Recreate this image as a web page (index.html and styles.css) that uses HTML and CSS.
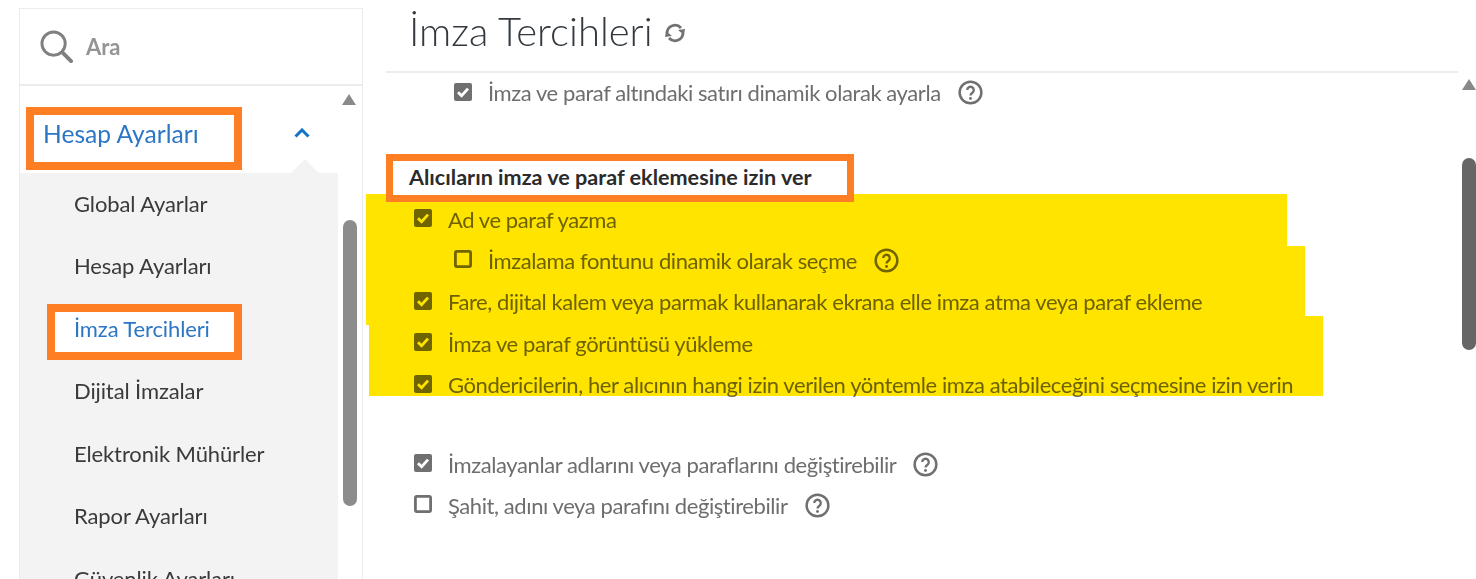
FILE: index.html
```html
<!DOCTYPE html>
<html lang="tr">
<head>
<meta charset="utf-8">
<title>İmza Tercihleri</title>
<link rel="stylesheet" href="styles.css">
</head>
<body>
<div class="page">
  <aside class="sidebar">
    <div class="search">
      <svg class="search-icon" viewBox="0 0 34 34"><circle cx="14" cy="14" r="12" /><path d="M23 23l9 9" /></svg>
      <span class="search-text">Ara</span>
    </div>
    <div class="nav-wrap">
      <nav class="nav">
        <div class="nav-head">
          <span class="marked mark-head">Hesap Ayarları</span>
          <svg class="chevron" viewBox="0 0 16 10"><path d="M1.5 8.5L8 2l6.5 6.5" /></svg>
        </div>
        <ul class="nav-list">
          <li class="nav-item">Global Ayarlar</li>
          <li class="nav-item">Hesap Ayarları</li>
          <li class="nav-item active"><span class="marked mark-item">İmza Tercihleri</span></li>
          <li class="nav-item">Dijital İmzalar</li>
          <li class="nav-item">Elektronik Mühürler</li>
          <li class="nav-item">Rapor Ayarları</li>
          <li class="nav-item">Güvenlik Ayarları</li>
        </ul>
      </nav>
      <div class="scrollbar side-scroll"><i class="arrow"></i><i class="thumb"></i></div>
    </div>
  </aside>
  <main class="main">
    <h1 class="title">İmza Tercihleri
      <svg class="refresh" viewBox="0 0 24 20"><path d="M4 10a8 8 0 0 1 14-5" /><path d="M20 10a8 8 0 0 1-14 5" /><path class="fill" d="M15 7l7-1-1 6z" /><path class="fill" d="M9 13l-7 1 1-6z" /></svg>
    </h1>
    <div class="content">
      <div class="rows">
        <label class="row sub"><svg class="box on" viewBox="0 0 18 18"><use href="#chk"/></svg><span>İmza ve paraf altındaki satırı dinamik olarak ayarla</span><svg class="help" viewBox="0 0 26 26"><use href="#hlp"/></svg></label>
        <div class="row heading"><b class="marked mark-section">Alıcıların imza ve paraf eklemesine izin ver</b></div>
        <label class="row"><svg class="box on" viewBox="0 0 18 18"><use href="#chk"/></svg><span>Ad ve paraf yazma</span></label>
        <label class="row sub"><svg class="box" viewBox="0 0 18 18"><use href="#unc"/></svg><span>İmzalama fontunu dinamik olarak seçme</span><svg class="help" viewBox="0 0 26 26"><use href="#hlp"/></svg></label>
        <label class="row"><svg class="box on" viewBox="0 0 18 18"><use href="#chk"/></svg><span>Fare, dijital kalem veya parmak kullanarak ekrana elle imza atma veya paraf ekleme</span></label>
        <label class="row"><svg class="box on" viewBox="0 0 18 18"><use href="#chk"/></svg><span>İmza ve paraf görüntüsü yükleme</span></label>
        <label class="row"><svg class="box on" viewBox="0 0 18 18"><use href="#chk"/></svg><span>Göndericilerin, her alıcının hangi izin verilen yöntemle imza atabileceğini seçmesine izin verin</span></label>
        <label class="row gap"><svg class="box on" viewBox="0 0 18 18"><use href="#chk"/></svg><span>İmzalayanlar adlarını veya paraflarını değiştirebilir</span><svg class="help" viewBox="0 0 26 26"><use href="#hlp"/></svg></label>
        <label class="row"><svg class="box" viewBox="0 0 18 18"><use href="#unc"/></svg><span>Şahit, adını veya parafını değiştirebilir</span><svg class="help" viewBox="0 0 26 26"><use href="#hlp"/></svg></label>
      </div>
      <div class="scrollbar main-scroll"><i class="arrow"></i><i class="thumb"></i></div>
    </div>
  </main>
  <div class="highlight"></div>
</div>
<svg class="defs" width="0" height="0">
  <symbol id="chk" viewBox="0 0 18 18"><rect width="18" height="18" rx="2" fill="#707070"/><path d="M4 9.2l3.6 3.6L14 5.6" fill="none" stroke="#fff" stroke-width="2.8"/></symbol>
  <symbol id="unc" viewBox="0 0 18 18"><rect x="1.4" y="1.4" width="15.2" height="15.2" rx="1.5" fill="#fff" stroke="#707070" stroke-width="2.8"/></symbol>
  <symbol id="hlp" viewBox="0 0 26 26"><circle cx="13" cy="13" r="11.3" fill="none" stroke="#707070" stroke-width="2.6"/><path d="M9.6 10.4a3.4 3.4 0 1 1 5.4 2.8c-1.3.9-2 1.5-2 3" fill="none" stroke="#707070" stroke-width="2.4"/><circle cx="13" cy="19.3" r="1.5" fill="#707070"/></symbol>
</svg>
</body>
</html>
```
FILE: styles.css
```css
* { box-sizing: border-box; }
html, body { margin: 0; height: 100%; overflow: hidden; background: #fff; }
body { font-family: "Lato", "Open Sans", sans-serif; color: #6e6e6e; }
.page { position: relative; display: flex; height: 579px; padding: 8px 0 0 19px; overflow: hidden; }
.defs { position: absolute; }

.sidebar { flex: 0 0 344px; height: 640px; border: 1px solid #ececec; }
.search { display: flex; align-items: center; height: 77px; padding: 0 0 0 20px; border-bottom: 2px solid #ececec; }
.search-icon { width: 33px; height: 33px; fill: none; stroke: #808080; stroke-width: 3; }
.search-icon path { stroke-width: 4; stroke-linecap: round; }
.search-text { margin-left: 13px; font-size: 22px; font-weight: 700; color: #949494; }
.nav-wrap { display: flex; margin-top: 8px; }
.nav { flex: 0 0 318px; }
.nav-head { position: relative; display: flex; align-items: center; justify-content: space-between; height: 79px; padding: 0 28px 0 23px; color: #2c76c5; font-size: 24.6px; background: #fff; }
.chevron { width: 16px; height: 10px; margin-top: -2px; fill: none; stroke: #1473c8; stroke-width: 3; }
.nav-head::after { content: ""; position: absolute; right: 19px; bottom: 0; border: solid transparent; border-width: 0 14px 14px; border-bottom-color: #f3f3f3; }
.nav-list { margin: 0; padding: 0 0 0 54px; list-style: none; background: #f3f3f3; height: 460px; }
.nav-item { display: flex; align-items: center; height: 62.5px; padding-bottom: 2px; font-size: 22px; letter-spacing: -0.12px; color: #3a3a3a; }
.nav-item.active { color: #2c76c5; }

.marked { position: relative; z-index: 0; }
.marked::before { content: ""; position: absolute; z-index: -1; border: 8px solid #fe7f23; background: #fff; }
.mark-head::before { left: -17px; right: -43px; top: -12px; bottom: -22px; }
.mark-item::before { left: -27px; right: -32px; top: -11px; bottom: -18px; }
.mark-section::before { left: -23px; right: -42px; top: -10px; bottom: -12px; border-width: 7px; }

.scrollbar { position: relative; flex: 0 0 14px; }
.scrollbar .arrow { position: absolute; left: 0; border: solid transparent; border-width: 0 7.5px 11px; border-bottom-color: #8a8a8a; }
.scrollbar .thumb { position: absolute; left: 0; width: 14px; border-radius: 7px; }
.side-scroll { margin-left: 5px; }
.side-scroll .arrow { top: 0; left: -1px; }
.side-scroll .thumb { top: 126px; height: 286px; background: #8c8c8c; }
.main-scroll { margin-left: 4px; }
.main-scroll .arrow { top: 8px; border-bottom-color: #888; }
.main-scroll .thumb { top: 87px; height: 192px; background: #666; }

.main { flex: 1; margin: -8px 0 0 23px; min-width: 0; }
.title { display: flex; align-items: center; height: 71px; margin: 0; padding: 0 0 9px 23px; font-size: 40px; font-weight: 300; color: #33393f; }
.refresh { width: 24px; height: 20px; margin-left: 10px; margin-top: 4px; fill: none; stroke: #727272; stroke-width: 2.8; }
.refresh .fill { fill: #727272; stroke: none; }
.content { display: flex; height: 508px; }
.rows { flex: 0 0 1072px; border-top: 2px solid #ececec; }
.row { display: flex; align-items: center; height: 41.4px; padding-left: 28px; font-size: 22px; letter-spacing: -0.42px; }
.row:first-child { margin-top: -1px; }
.row.sub { padding-left: 68px; }
.row.heading { position: relative; z-index: 2; height: 43px; margin-top: 42px; padding-left: 23px; color: #2b2b2b; font-size: 21.6px; letter-spacing: 0; }
.row.gap { margin-top: 38px; }
.box { flex: none; width: 18px; height: 18px; margin-top: -2px; margin-right: 16px; }
.help { flex: none; width: 25px; height: 25px; margin-left: 17px; }

.highlight { position: absolute; z-index: 1; left: 366px; top: 194px; width: 957px; height: 202px; background: #ffe400; mix-blend-mode: multiply; clip-path: polygon(0 0, 921px 0, 921px 52px, 939px 52px, 939px 122px, 957px 122px, 957px 202px, 3px 202px, 3px 131px, 0 131px); }
```
